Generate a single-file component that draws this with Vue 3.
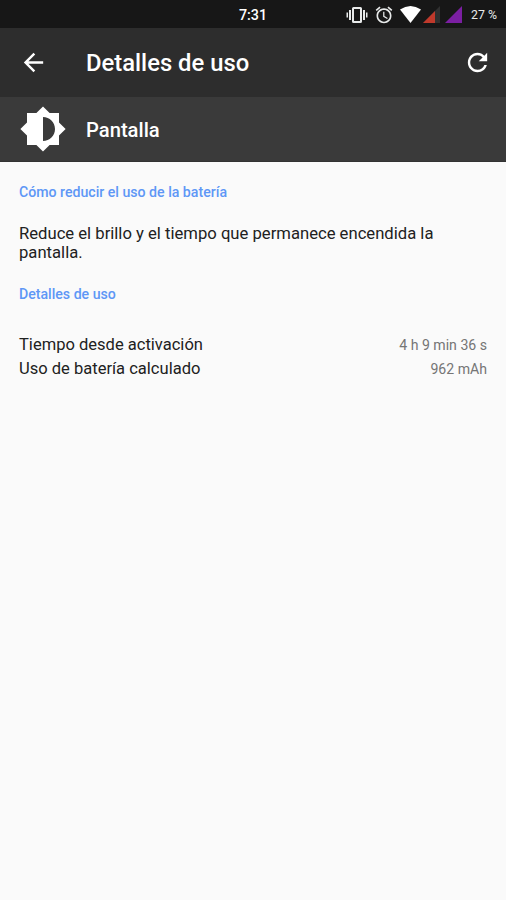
<script setup>
const details = [
  { label: 'Tiempo desde activación', value: '4 h 9 min 36 s' },
  { label: 'Uso de batería calculado', value: '962 mAh' },
]
</script>

<template>
  <main class="screen">
    <div class="status">
      <span class="clock">7:31</span>
      <div class="tray">
        <svg class="vibrate" width="22" height="18" viewBox="0 0 22 18"><path fill="#e8eaea" d="M0.500 6.500H2v5H.500zM3 4h2v10H3zM17 4h2v10h-2zM20 6.500h1.500v5H20z"/><rect x="7" y="2" width="8" height="14" rx=".5" fill="none" stroke="#e8eaea" stroke-width="2"/></svg>
        <svg class="alarm" width="20" height="20" viewBox="0 0 24 24"><path fill="#e8eaea" d="M22 5.720l-4.600-3.860-1.290 1.530 4.600 3.860L22 5.720zM7.880 3.390L6.600 1.860 2 5.710l1.290 1.530 4.590-3.850zM12.500 8H11v6l4.750 2.850.75-1.230-4-2.370V8zM12 4c-4.970 0-9 4.030-9 9s4.020 9 9 9c4.970 0 9-4.030 9-9s-4.030-9-9-9zm0 16c-3.870 0-7-3.130-7-7s3.130-7 7-7 7 3.130 7 7-3.130 7-7 7z"/></svg>
        <svg class="wifi" width="21" height="17" viewBox="0 0 21 17"><path fill="#fff" d="M0 3.500Q10.500-3.500 21 3.500L10.500 17z"/></svg>
        <svg class="signal" width="17" height="17" viewBox="0 0 17 17"><path fill="#303030" d="M17 0v17H0z"/><path fill="#c0392b" d="M12 5v12H0z"/></svg>
        <svg class="signal" width="17" height="17" viewBox="0 0 17 17"><path fill="#7b1fa2" d="M17 0v17H0z"/></svg>
        <span class="battery">27 %</span>
      </div>
    </div>
    <header class="bar">
      <svg class="back" width="29" height="29" viewBox="0 0 24 24"><path fill="#fff" d="M20 11H7.830l5.590-5.590L12 4l-8 8 8 8 1.410-1.410L7.830 13H20v-2z"/></svg>
      <h1>Detalles de uso</h1>
      <svg class="refresh" width="29" height="29" viewBox="0 0 24 24"><path fill="#fff" d="M17.650 6.350C16.200 4.900 14.210 4 12 4c-4.420 0-7.990 3.580-7.990 8s3.570 8 7.990 8c3.730 0 6.840-2.550 7.730-6h-2.080c-.82 2.330-3.040 4-5.650 4-3.310 0-6-2.690-6-6s2.690-6 6-6c1.660 0 3.140.69 4.220 1.780L13 11h7V4l-2.350 2.350z"/></svg>
    </header>
    <section class="subject">
      <svg width="48" height="48" viewBox="0 0 24 24"><path fill="#fff" d="M20 15.310L23.310 12 20 8.690V4h-4.690L12 .69 8.690 4H4v4.690L.69 12 4 15.310V20h4.690L12 23.310 15.310 20H20v-4.690zM12 18V6c3.310 0 6 2.690 6 6s-2.690 6-6 6z"/></svg>
      <h2>Pantalla</h2>
    </section>
    <section class="content">
      <h3>Cómo reducir el uso de la batería</h3>
      <p>Reduce el brillo y el tiempo que permanece encendida la pantalla.</p>
      <h3>Detalles de uso</h3>
      <dl>
        <div v-for="row in details" :key="row.label" class="row">
          <dt>{{ row.label }}</dt>
          <dd>{{ row.value }}</dd>
        </div>
      </dl>
    </section>
  </main>
</template>

<style>
body { margin: 0; background: #fafafa; }
</style>

<style scoped>
.screen { min-height: 900px; background: #fafafa; color: #212121; font-family: Roboto, sans-serif; }
h1, h2, h3, p, dl, dd { margin: 0; }
svg { display: block; flex: none; }
.status { height: 28px; display: grid; grid-template-columns: 1fr auto 1fr; align-items: center; background: #171717; color: #fff; }
.clock { grid-column: 2; font-size: 14.300px; font-weight: 500; line-height: 28px; padding-top: 1px; }
.tray { display: flex; align-items: center; justify-content: flex-end; padding-right: 9px; }
.alarm { margin-left: 6px; }
.wifi { margin-left: 6px; }
.signal { margin-left: 2px; }
.signal + .signal { margin-left: 5px; }
.battery { margin-left: 9px; font-size: 12.300px; white-space: nowrap; color: #e8eaea; }
.bar { height: 69px; display: flex; align-items: center; box-sizing: border-box; padding: 0 14px 0 19px; background: #2d2d2d; color: #fff; }
h1 { flex: 1; margin-left: 38px; padding-top: 1px; font-size: 23.800px; font-weight: 500; }
.subject { height: 65px; display: flex; align-items: flex-start; padding: 8px 0 0 19px; box-sizing: border-box; border-bottom: 1px solid #333; background: #3a3a3a; color: #fff; }
h2 { margin-left: 19px; padding-top: 1px; font-size: 20.200px; font-weight: 500; line-height: 48px; }
.content { padding: 21px 19px; }
h3 { color: #5e97f6; font-size: 14.130px; font-weight: 500; line-height: 19px; }
p { font-size: 16.650px; line-height: 19px; margin: 22px 0 23px; }
dl { margin-top: 28px; }
.row { display: flex; justify-content: space-between; align-items: center; height: 24px; }
dt { font-size: 16.550px; }
dd { padding-top: 1px; font-size: 14.100px; color: #757575; }
</style>
